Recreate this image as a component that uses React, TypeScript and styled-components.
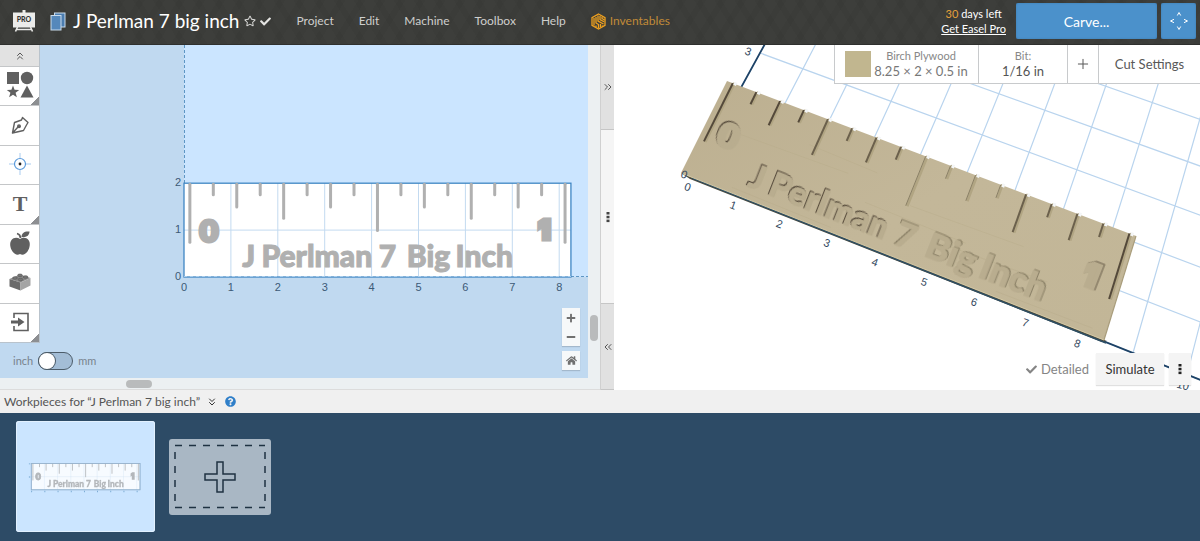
import React from "react";
import styled, { createGlobalStyle, css } from "styled-components";
import { FaCheck, FaHome, FaMinus, FaPlus, FaQuestionCircle, FaRegStar } from "react-icons/fa";
import { ChevronsDown, ChevronsLeft, ChevronsRight, ChevronsUp, Plus } from "lucide-react";

const GlobalStyle = createGlobalStyle`
  *, *::before, *::after { box-sizing: border-box; }
  body { margin: 0; font-family: Lato, "Liberation Sans", sans-serif; font-size: 13px; color: #555; background: #2d4b66; }
  button { font: inherit; color: inherit; border: 0; padding: 0; margin: 0; background: none; cursor: pointer; }
  a { color: inherit; }
`;

const Page = styled.div`
  display: flex;
  flex-direction: column;
  min-height: 100vh;
`;

/* ---------- header ---------- */

const Header = styled.header`
  display: flex;
  align-items: center;
  height: 45px;
  padding: 0 4px 2px 12px;
  color: #fff;
  background:
    repeating-linear-gradient(58deg, rgba(0, 0, 0, 0.04) 0 6px, transparent 6px 17px),
    repeating-linear-gradient(-58deg, rgba(0, 0, 0, 0.04) 0 6px, transparent 6px 17px),
    #3d3e3b;
  border-bottom: 1px solid #2f302e;
`;

const Title = styled.h1`
  display: flex;
  align-items: center;
  margin: 0 0 0 14px;
  font-size: 19px;
  line-height: 24px;
  font-weight: 400;
  white-space: nowrap;
  svg { flex: none; }
`;

const TitleName = styled.span`
  margin: 0 5px 0 7px;
`;

const TitleButton = styled.button`
  display: flex;
  margin-right: 4px;
  color: #d6d6d4;
`;

const Nav = styled.nav`
  display: flex;
  align-items: center;
  gap: 25px;
  margin-left: 25px;
  font-size: 12px;
  line-height: 20px;
`;

const NavLink = styled.a<{ $brand?: boolean }>`
  display: flex;
  align-items: center;
  gap: 4px;
  text-decoration: none;
  color: ${(p) => (p.$brand ? "#c08a38" : "#cfcfcd")};
`;

const HeaderEnd = styled.div`
  display: flex;
  align-items: center;
  gap: 4px;
  height: 36px;
  margin-left: auto;
`;

const Trial = styled.div`
  margin-right: 6px;
  font-size: 11px;
  line-height: 15px;
  text-align: center;
  white-space: nowrap;
  a { display: block; }
  b { font-weight: 400; color: #e5a03a; }
`;

const BlueButton = styled.button<{ $wide?: boolean }>`
  display: flex;
  align-items: center;
  justify-content: center;
  width: ${(p) => (p.$wide ? "141px" : "35px")};
  height: 36px;
  border-radius: 2px;
  background: #4b91cb;
  box-shadow: inset 0 0 2px #3a79b0;
  color: #fff;
  font-size: 14px;
`;

/* ---------- work area ---------- */

const Workspace = styled.main`
  display: grid;
  grid-template-columns: minmax(0, 50%) 14px minmax(0, 1fr);
  flex: 1;
  min-height: 345px;
`;

const Editor = styled.section`
  display: grid;
  grid-template: minmax(0, 1fr) 12px / minmax(0, 1fr) 12px;
  background: #ecf0f2;
`;

const Stage = styled.div`
  position: relative;
  display: flex;
  justify-content: space-between;
  align-items: stretch;
  overflow: hidden;
  background: #c0d9f0;
`;

const Backdrop = styled.svg`
  position: absolute;
  inset: 0;
  width: 100%;
  height: 100%;
`;

const LeftTools = styled.div`
  position: relative;
  display: flex;
  flex-direction: column;
`;

const Toolbox = styled.div`
  display: flex;
  flex-direction: column;
  width: 40px;
  height: 298px;
  border-right: 1px solid #b9c3cc;
  border-bottom: 1px solid #b9c3cc;
  background: #fff;
`;

const Collapse = styled.button`
  display: flex;
  align-items: center;
  justify-content: center;
  height: 21px;
  background: #e2e2e2;
  color: #555;
`;

const Tool = styled.button<{ $more?: boolean }>`
  display: flex;
  flex: 1;
  align-items: center;
  justify-content: center;
  padding-bottom: 2px;
  border-top: 1px solid #c4c6c8;
  color: #606060;
  background: ${(p) => (p.$more ? "linear-gradient(135deg, transparent 50%, #8d8f92 51%) right bottom / 9px 9px no-repeat, #fff" : "#fff")};
`;

const UnitSwitch = styled.label`
  display: flex;
  align-items: center;
  gap: 5px;
  margin: 8px 0 0 13px;
  font-size: 11px;
  line-height: 20px;
  color: #78838d;
`;

const Switch = styled.input`
  appearance: none;
  position: relative;
  width: 35px;
  height: 18px;
  margin: 0;
  border: 1px solid #4c5c69;
  border-radius: 9px;
  background: #a3bdd6;
  &::before {
    content: "";
    position: absolute;
    left: 0;
    top: 0;
    width: 16px;
    height: 16px;
    border-radius: 8px;
    background: #fff;
    box-shadow: 0 0 0 1px #4c5c69;
  }
  &:checked::before { left: 17px; }
`;

const ZoomTools = styled.div`
  position: relative;
  display: flex;
  flex-direction: column;
  justify-content: flex-end;
  gap: 5px;
  margin: 0 8px 8px 0;
`;

const ZoomGroup = styled.div`
  display: flex;
  flex-direction: column;
  width: 18px;
  background: #f6f8f9;
  box-shadow: 0 1px 1px rgba(0, 0, 0, 0.15);
`;

const ZoomButton = styled.button`
  display: flex;
  align-items: center;
  justify-content: center;
  height: 19px;
  color: #707070;
`;

const Scroll = styled.div<{ $horizontal?: boolean }>`
  display: flex;
  justify-content: flex-end;
  ${(p) =>
    p.$horizontal
      ? css`grid-column: 1 / -1; align-items: flex-start; padding: 2px 448px 2px 0; border-bottom: 1px solid #dcdcdc;`
      : css`flex-direction: column; align-items: center; padding-bottom: 37px;`}
`;

const Thumb = styled.div<{ $horizontal?: boolean }>`
  width: ${(p) => (p.$horizontal ? "26px" : "8px")};
  height: ${(p) => (p.$horizontal ? "8px" : "26px")};
  border-radius: 4px;
  background: #b9bbbc;
`;

const Divider = styled.div`
  display: grid;
  grid-template-rows: 85fr 174fr 86fr;
  border-left: 1px solid #d0d0d0;
`;

const DividerButton = styled.button<{ $grip?: boolean }>`
  display: flex;
  align-items: center;
  justify-content: center;
  border-bottom: 1px solid #c6c6c6;
  color: #555;
  background: ${(p) => (p.$grip ? "#f5f5f5" : "#e1e1e1")};
`;

const Preview = styled.section`
  position: relative;
  display: flex;
  flex-direction: column;
  justify-content: space-between;
  align-items: flex-end;
  overflow: hidden;
  background: #fff;
`;

const CutBar = styled.div`
  position: relative;
  display: flex;
  height: 39px;
  border: 1px solid #c8cacc;
  border-width: 0 0 1px 1px;
  background: #fff;
`;

const CutCell = styled.button<{ $width: number }>`
  display: flex;
  align-items: center;
  justify-content: center;
  gap: 3px;
  width: ${(p) => p.$width}px;
  border-right: 1px solid #c8cacc;
  color: #585858;
  &:last-child { border-right: 0; }
`;

const Swatch = styled.span`
  width: 26px;
  height: 26px;
  background: #c1b68f;
`;

const CutText = styled.span<{ $muted?: boolean }>`
  display: flex;
  flex-direction: column;
  align-items: center;
  font-size: 13px;
  line-height: 17px;
  color: ${(p) => (p.$muted ? "#777" : "#555")};
  small { font-size: 11px; line-height: 15px; color: #888; }
`;

const PreviewTools = styled.div`
  position: relative;
  display: flex;
  align-items: center;
  margin: 0 9px 5px 0;
`;

const Detailed = styled.button`
  display: flex;
  align-items: center;
  gap: 4px;
  margin-right: 7px;
  color: #858585;
`;

const GreyButton = styled.button<{ $width: number }>`
  display: flex;
  align-items: center;
  justify-content: center;
  width: ${(p) => p.$width}px;
  height: 32px;
  margin-right: ${(p) => (p.$width > 40 ? 5 : 0)}px;
  background: #f4f4f4;
  box-shadow: 0 1px 1px rgba(0, 0, 0, 0.12);
  color: #333;
`;

/* ---------- workpieces ---------- */

const PiecesBar = styled.div`
  display: flex;
  align-items: center;
  height: 23px;
  padding-left: 4px;
  background: #f0f0f0;
`;

const PiecesTitle = styled.h2`
  margin: 0 6px 0 0;
  font-size: 12px;
  line-height: 20px;
  font-weight: 400;
`;

const BarButton = styled.button<{ $blue?: boolean }>`
  display: flex;
  margin-right: 7px;
  color: ${(p) => (p.$blue ? "#2f7fc9" : "#333")};
`;

const Tray = styled.div`
  display: flex;
  align-items: center;
  gap: 14px;
  padding: 8px 16px 9px;
  background: #2d4b66;
  border-bottom: 1px solid #1f3242;
`;

const Piece = styled.button`
  width: 139px;
  height: 111px;
  border-radius: 3px;
  background: #cbe5ff;
  box-shadow: inset 0 0 0 1px #e2f1ff;
  svg { display: block; width: 100%; height: 100%; }
`;

const AddPiece = styled.button`
  width: 102px;
  height: 76px;
  border-radius: 3px;
  background: #a9b7c4;
  svg { display: block; }
`;

/* ---------- ruler design, in inches ---------- */

const BOARD_W = 8.25;
const BOARD_H = 2;

const tickLength = (k: number) => {
  if (k % 16 === 0) return 1.28;
  if (k === 8) return 1.03;
  if (k % 4 === 0) return 0.77;
  return k % 2 === 0 ? 0.53 : 0.27;
};
const ticks = Array.from({ length: 17 }, (_, k) => ({ k, x: 0.125 + k / 2, len: tickLength(k) }));

type Engraving = { text: string; x: number; y: number; size: number; family: string; bold: number };
const BODY_FONT = 'Lato, "Liberation Sans", sans-serif';
const engravings: Engraving[] = [
  { text: "0", x: 0.31, y: 0.75, size: 30, family: '"DejaVu Sans", sans-serif', bold: 3 },
  { text: "1", x: 7.56, y: 0.8, size: 26, family: 'Inter, "Liberation Sans", sans-serif', bold: 5 },
  { text: "J", x: 1.24, y: 0.22, size: 30, family: BODY_FONT, bold: 1 },
  { text: "Perlman", x: 1.65, y: 0.22, size: 30, family: BODY_FONT, bold: 1 },
  { text: "7", x: 4.15, y: 0.22, size: 30, family: BODY_FONT, bold: 1 },
  { text: "Big", x: 4.75, y: 0.22, size: 30, family: BODY_FONT, bold: 1 },
  { text: "Inch", x: 5.79, y: 0.22, size: 30, family: BODY_FONT, bold: 1 },
];

/* ---------- flat view ---------- */

const PPI = 46.9;
const fx = (x: number) => 184 + x * PPI;
const fy = (y: number) => 277 - y * PPI;

const FlatRuler = () => (
  <g>
    <rect x={fx(0)} y={fy(2)} width={BOARD_W * PPI} height={BOARD_H * PPI} fill="#fff" />
    <g stroke="#c3daf0" strokeWidth="1">
      {[1, 2, 3, 4, 5, 6, 7, 8].map((n) => (
        <line key={n} x1={fx(n)} x2={fx(n)} y1={fy(0)} y2={fy(2)} />
      ))}
      <line x1={fx(0)} x2={fx(BOARD_W)} y1={fy(1)} y2={fy(1)} />
    </g>
    <rect x={fx(0)} y={fy(2)} width={BOARD_W * PPI} height={BOARD_H * PPI} fill="none" stroke="#3f86c4" strokeWidth="1.3" />
    <g stroke="#b0b0b0" strokeWidth="3" strokeLinecap="round">
      {ticks.map((t) => (
        <line key={t.k} x1={fx(t.x)} x2={fx(t.x)} y1={fy(2) + 1} y2={fy(2 - t.len) - 1} />
      ))}
    </g>
    {engravings.map((e) => (
      <text key={e.text} x={fx(e.x)} y={fy(e.y)} fontFamily={e.family} fontSize={e.size} fontWeight="900" fill="#b0b0b0" stroke="#b0b0b0" strokeWidth={e.bold}>
        {e.text}
      </text>
    ))}
  </g>
);

const FlatView = () => (
  <Backdrop viewBox="0 45 588 333" preserveAspectRatio="xMinYMin slice" role="img" aria-label="Ruler design">
    <rect x="184" y="45" width="1200" height="232" fill="#cbe5ff" />
    <path d="M184.5 45V183M571 276.5H1200" stroke="#5e96c4" strokeDasharray="3 2" fill="none" />
    <FlatRuler />
    <path d="M184 276.5H571" stroke="#a9cdec" strokeDasharray="3 3" />
    <g fontFamily="Liberation Sans, Arial, sans-serif" fontSize="11" fill="#3c5a76">
      {[0, 1, 2, 3, 4, 5, 6, 7, 8].map((n) => (
        <text key={n} x={fx(n)} y="291" textAnchor="middle">{n}</text>
      ))}
      {[0, 1, 2].map((n) => (
        <text key={n} x="181" y={fy(n) + 3} textAnchor="end">{n}</text>
      ))}
    </g>
  </Backdrop>
);

/* ---------- perspective view ---------- */

type Pt = [number, number];

// Maps a w × h rectangle on to the quad a (origin), b (+x), c (+x+y), d (+y).
const perspective = (w: number, h: number, a: Pt, b: Pt, c: Pt, d: Pt) => {
  const dx1 = b[0] - c[0], dx2 = d[0] - c[0], sx = a[0] - b[0] + c[0] - d[0];
  const dy1 = b[1] - c[1], dy2 = d[1] - c[1], sy = a[1] - b[1] + c[1] - d[1];
  const den = dx1 * dy2 - dx2 * dy1;
  const g = (sx * dy2 - dx2 * sy) / den;
  const k = (dx1 * sy - sx * dy1) / den;
  return (x: number, y: number): Pt => {
    const u = x / w, v = y / h, q = g * u + k * v + 1;
    return [
      ((b[0] - a[0] + g * b[0]) * u + (d[0] - a[0] + k * d[0]) * v + a[0]) / q,
      ((b[1] - a[1] + g * b[1]) * u + (d[1] - a[1] + k * d[1]) * v + a[1]) / q,
    ];
  };
};

const bed = perspective(9, 3, [692, 177], [1133, 353], [1175, 206], [760, 53]);
const top = perspective(BOARD_W, BOARD_H, [681, 173], [1104, 340], [1136, 236], [727, 81]);

const seg = (f: (x: number, y: number) => Pt, x1: number, y1: number, x2: number, y2: number) =>
  `M${f(x1, y1).join(" ")}L${f(x2, y2).join(" ")}`;
const angle = (x: number, y: number) => {
  const [ax, ay] = top(x, y);
  const [bx, by] = top(x + 1, y);
  return { deg: (Math.atan2(by - ay, bx - ax) * 180) / Math.PI, scale: Math.hypot(bx - ax, by - ay) / PPI };
};

const range = (n: number) => Array.from({ length: n }, (_, i) => i);
const grid = [
  ...range(13).map((n) => seg(bed, n, 0, n, 8)),
  ...range(8).map((n) => seg(bed, 0, n, 12, n)),
].join("");

const toneAt = (x: number) => {
  const d = Math.abs(x - 4.9);
  return d > 3 ? "#54493a" : d > 1.2 ? "#6b604c" : "#8a8066";
};

const PerspectiveView = () => (
  <Backdrop viewBox="614 45 586 345" preserveAspectRatio="xMinYMin slice" role="img" aria-label="Carved ruler preview">
    <defs>
      <linearGradient id="wood" x1="0" y1="0" x2="1" y2="1">
        <stop offset="0" stopColor="#bcaf90" />
        <stop offset="0.5" stopColor="#c3b799" />
        <stop offset="1" stopColor="#c2b697" />
      </linearGradient>
    </defs>
    <path d={grid} stroke="#b9d4ee" strokeWidth="1.2" fill="none" />
    <path d={seg(bed, 0, 0, 0, 5) + seg(bed, 0, 0, 12, 0)} stroke="#1d4266" strokeWidth="1.8" fill="none" />
    <path d="M681 173L1104 340L1107 341L1102 342L690 179Z" fill="#4c4a3b" />
    <path d="M692 178L1106 343" stroke="#2d4f66" strokeWidth="1.4" />
    <path d="M681 173L727 81L1136 236L1104 340Z" fill="url(#wood)" />
    <path d="M681 173L1104 340" stroke="#d3c7a3" strokeWidth="1" />
    <path d="M1136 236L1104 340" stroke="#a99d7c" strokeWidth="1.2" />
    <g fill="none" stroke="#b7ab89" opacity="0.4">
      <path d={seg(top, 0.6, 1.1, 2.9, 1.15) + seg(top, 2, 1.4, 3.4, 1.36) + seg(top, 4.2, 1.0, 6.4, 1.05) + seg(top, 1, 0.1, 3, 0.08)} />
      <path d={seg(top, 5, 0.55, 7, 0.6) + seg(top, 6.2, 0.1, 8, 0.12) + seg(top, 3.4, 0.75, 5.4, 0.72)} />
    </g>
    {ticks.map((t) => (
      <g key={t.k} fill="none">
        <path d={seg(top, t.x + 0.03, 2.02, t.x + 0.03, 2 - t.len)} stroke="#b1a583" strokeWidth="2.6" />
        <path d={seg(top, t.x, 2.0, t.x, 2 - t.len)} stroke={toneAt(t.x)} strokeWidth={Math.abs(t.x - 4.9) > 1.2 ? 2 : 1} />
        <path d={seg(top, t.x + 0.05, 2.04, t.x + 0.05, 1.97)} stroke="#f4f6f7" strokeWidth="3" />
      </g>
    ))}
    {engravings.map((e) => {
      const [x, y] = top(e.x, e.y);
      const a = angle(e.x, e.y);
      const side = e.x < 4.7 ? -1 : 1;
      return (
        <text
          key={e.text}
          transform={`translate(${x} ${y}) rotate(${a.deg})`}
          fontFamily={e.family}
          fontSize={Math.round(e.size * a.scale)}
          fontWeight="900"
          fill="#b9ad8f"
          stroke="#b9ad8f"
          strokeWidth={e.bold}
          style={{ filter: `drop-shadow(${side}px -1px 0 ${toneAt(e.x)})` }}
        >
          {e.text}
        </text>
      );
    })}
    <g fontFamily="Liberation Sans, Arial, sans-serif" fontSize="11" fill="#34495e" textAnchor="middle">
      {[0, 1, 2, 3, 4, 5, 6, 7, 8].map((n) => {
        const [x, y] = bed(n, -0.22);
        return <text key={n} transform={`translate(${x + 1} ${y}) rotate(20)`} dy="4">{n}</text>;
      })}
      <text transform="translate(1182 389) rotate(14)">10</text>
      <text transform="translate(683 178) rotate(20)">0</text>
      <text transform="translate(747 55) rotate(20)">3</text>
    </g>
  </Backdrop>
);

/* ---------- small drawings ---------- */

const EaselLogo = () => (
  <svg width="24" height="24" viewBox="0 0 24 24" role="img" aria-label="Easel Pro">
    <path d="M10.5 1h3v3h-3zM1 3.5h22v15H1z" fill="#ececea" />
    <path d="M5.5 18L3.5 22.5M18.5 18L20.500 22.500M5 20.500H19" stroke="#ececea" strokeWidth="1.6" fill="none" />
    <text x="12" y="13" textAnchor="middle" fontFamily="Lato, sans-serif" fontSize="7" fontWeight="900" fill="#333">PRO</text>
  </svg>
);

const SheetsIcon = () => (
  <svg width="16" height="19" viewBox="0 0 16 19" aria-hidden="true">
    <rect x="4.500" y="1" width="10.500" height="14" fill="#4b7db0" stroke="#c9dbec" />
    <rect x="1" y="3.500" width="10" height="14.500" fill="#5588bb" stroke="#c9dbec" />
  </svg>
);

const HexIcon = () => (
  <svg width="15" height="17" viewBox="0 0 15 17" aria-hidden="true" fill="none" stroke="#f0a11e" strokeWidth="1.300">
    <path d="M7.500 1L14 4.700V12.300L7.500 16L1 12.300V4.700Z" />
    <path d="M3 5V12.500M5 4V10L7.500 11.500V15M5 12.500V14M7 2.500V8L12.500 11M9 3V6.500L13 8.700M11 4V5.500L13.500 7M9.500 11V14M11.500 12.500V13.500" />
  </svg>
);

const JogIcon = () => (
  <svg width="20" height="20" viewBox="0 0 20 20" aria-hidden="true" fill="none" stroke="#fff">
    <path d="M8.300 4.500L10 1.500L11.700 4.500M8.300 15.500L10 18.500L11.700 15.500M5 8.300L1.500 10L5 11.700M15 8.300L18.500 10L15 11.700" />
  </svg>
);

const ShapesIcon = () => (
  <svg width="28" height="28" viewBox="0 0 28 28" aria-hidden="true" fill="currentColor">
    <rect x="1" y="1" width="12" height="12" />
    <circle cx="21" cy="7" r="6.200" />
    <path d="M7 14.500L8.600 18.800L13.200 19L9.600 21.800L10.900 26.200L7 23.700L3.100 26.200L4.400 21.800L0.800 19L5.400 18.800Z" />
    <path d="M21 14.500L27.500 26.500H14.500Z" />
  </svg>
);

const PenIcon = () => (
  <svg width="20" height="20" viewBox="0 0 20 20" aria-hidden="true" fill="none" stroke="currentColor" strokeWidth="1.400" strokeLinejoin="round">
    <path d="M2.500 18L4.500 7.500L11.500 5L12.500 2.500L18 7.500L16.500 10L13.500 15.500L2.500 18ZM2.500 18L8 12" />
    <circle cx="9" cy="11.200" r="1.300" fill="currentColor" />
  </svg>
);

const TargetIcon = () => (
  <svg width="22" height="22" viewBox="0 0 22 22" aria-hidden="true" fill="none" stroke="#5b9bdc">
    <circle cx="11" cy="11" r="5.500" strokeWidth="1.200" />
    <path d="M11 0V5M11 17V22M0 11H5M17 11H22" stroke="#a8cbef" />
    <circle cx="11" cy="11" r="1.400" fill="#222" stroke="none" />
  </svg>
);

const TextIcon = () => (
  <svg width="16" height="17" viewBox="0 0 16 17" aria-hidden="true" fill="currentColor">
    <text x="8" y="16" textAnchor="middle" fontFamily="Liberation Serif, serif" fontSize="22" fontWeight="700">T</text>
  </svg>
);

const AppleIcon = () => (
  <svg width="22" height="26" viewBox="0 0 22 26" aria-hidden="true" fill="currentColor">
    <path d="M11 9C8.500 7.300 4.500 7.300 2.500 10C0.300 13 1 18 3.500 21.500C5.500 24.500 8.500 25.500 11 24C13.500 25.500 16.500 24.500 18.500 21.500C21 18 21.700 13 19.500 10C17.500 7.300 13.500 7.300 11 9Z" />
    <path d="M8 3.500C10 4 11.300 5.500 11.500 8" fill="none" stroke="currentColor" strokeWidth="1.800" />
    <path d="M12.500 7C12.500 3 15.500 1 20.500 1.500C20.500 5.500 17 7.800 12.500 7Z" />
  </svg>
);

const BrickIcon = () => (
  <svg width="22" height="18" viewBox="0 0 22 18" aria-hidden="true">
    <path d="M0.500 6L11 1.500L21.500 5L11.500 9.500Z" fill="#8a8a8a" />
    <path d="M0.500 6L11.500 9.500V17.500L0.500 13.500Z" fill="#6a6a6a" />
    <path d="M11.500 9.500L21.500 5V12.500L11.500 17.500Z" fill="#a5a5a5" />
    <g fill="#777" stroke="#555" strokeWidth="0.600">
      <ellipse cx="6" cy="5" rx="2.400" ry="1.300" /><ellipse cx="11" cy="2.300" rx="2.400" ry="1.300" />
      <ellipse cx="11.500" cy="6.500" rx="2.400" ry="1.300" /><ellipse cx="16.500" cy="4" rx="2.400" ry="1.300" />
    </g>
  </svg>
);

const ImportIcon = () => (
  <svg width="20" height="20" viewBox="0 0 20 20" aria-hidden="true">
    <path d="M4 6V1.500H18V18.500H4V14" fill="none" stroke="currentColor" strokeWidth="1.600" />
    <path d="M1 8.500H8V5.500L14.500 10L8 14.500V11.500H1Z" fill="currentColor" />
  </svg>
);

const Dots = ({ color }: { color: string }) => (
  <svg width="4" height="14" viewBox="0 0 4 14" aria-hidden="true" fill={color}>
    <rect x="0.500" y="2" width="3" height="2.500" /><rect x="0.500" y="5.800" width="3" height="2.500" /><rect x="0.500" y="9.600" width="3" height="2.500" />
  </svg>
);

const tools = [
  { name: "Shapes", icon: <ShapesIcon />, more: true },
  { name: "Pen", icon: <PenIcon /> },
  { name: "Drill point", icon: <TargetIcon /> },
  { name: "Text", icon: <TextIcon />, more: true },
  { name: "Icons", icon: <AppleIcon /> },
  { name: "Apps", icon: <BrickIcon /> },
  { name: "Import", icon: <ImportIcon />, more: true },
];

export default function App() {
  return (
    <Page>
      <GlobalStyle />
      <Header>
        <EaselLogo />
        <Title>
          <SheetsIcon />
          <TitleName>J Perlman 7 big inch</TitleName>
          <TitleButton aria-label="Favorite"><FaRegStar size={12} /></TitleButton>
          <FaCheck size={11} color="#e4e4e2" />
        </Title>
        <Nav>
          {["Project", "Edit", "Machine", "Toolbox", "Help"].map((item) => (
            <NavLink key={item} href="#">{item}</NavLink>
          ))}
          <NavLink href="#" $brand><HexIcon />Inventables</NavLink>
        </Nav>
        <HeaderEnd>
          <Trial>
            <b>30</b> days left
            <a href="#">Get Easel Pro</a>
          </Trial>
          <BlueButton $wide>Carve...</BlueButton>
          <BlueButton aria-label="Jog machine"><JogIcon /></BlueButton>
        </HeaderEnd>
      </Header>

      <Workspace>
        <Editor>
          <Stage>
            <FlatView />
            <LeftTools>
              <Toolbox>
                <Collapse aria-label="Collapse tools"><ChevronsUp size={12} strokeWidth={2} /></Collapse>
                {tools.map((t) => (
                  <Tool key={t.name} aria-label={t.name} $more={t.more}>{t.icon}</Tool>
                ))}
              </Toolbox>
              <UnitSwitch>
                inch
                <Switch type="checkbox" role="switch" />
                mm
              </UnitSwitch>
            </LeftTools>
            <ZoomTools>
              <ZoomGroup>
                <ZoomButton aria-label="Zoom in"><FaPlus size={10} /></ZoomButton>
                <ZoomButton aria-label="Zoom out"><FaMinus size={10} /></ZoomButton>
              </ZoomGroup>
              <ZoomGroup>
                <ZoomButton aria-label="Reset view"><FaHome size={11} /></ZoomButton>
              </ZoomGroup>
            </ZoomTools>
          </Stage>
          <Scroll><Thumb /></Scroll>
          <Scroll $horizontal><Thumb $horizontal /></Scroll>
        </Editor>
        <Divider>
          <DividerButton aria-label="Expand editor"><ChevronsRight size={12} strokeWidth={2} /></DividerButton>
          <DividerButton aria-label="Resize panels" $grip><Dots color="#444" /></DividerButton>
          <DividerButton aria-label="Expand preview"><ChevronsLeft size={12} strokeWidth={2} /></DividerButton>
        </Divider>
        <Preview>
          <PerspectiveView />
          <CutBar>
            <CutCell $width={144}>
              <Swatch />
              <CutText $muted><small>Birch Plywood</small>8.25 × 2 × 0.5 in</CutText>
            </CutCell>
            <CutCell $width={89}><CutText><small>Bit:</small>1/16 in</CutText></CutCell>
            <CutCell $width={31} aria-label="Add bit"><Plus size={16} strokeWidth={1.5} /></CutCell>
            <CutCell $width={101}>Cut Settings</CutCell>
          </CutBar>
          <PreviewTools>
            <Detailed><FaCheck size={11} />Detailed</Detailed>
            <GreyButton $width={68}>Simulate</GreyButton>
            <GreyButton $width={22} aria-label="More options"><Dots color="#222" /></GreyButton>
          </PreviewTools>
        </Preview>
      </Workspace>

      <PiecesBar>
        <PiecesTitle>Workpieces for “J Perlman 7 big inch”</PiecesTitle>
        <BarButton aria-label="Collapse workpieces"><ChevronsDown size={12} strokeWidth={2} /></BarButton>
        <BarButton aria-label="Help" $blue><FaQuestionCircle size={11} /></BarButton>
      </PiecesBar>
      <Tray>
        <Piece aria-label="Workpiece 1">
          <svg viewBox="130 32 494 395" aria-hidden="true">
            <g opacity="0.85">
              <FlatRuler />
              <rect x="184" y="183" width="387" height="94" fill="none" stroke="#8fa9c2" strokeWidth="3" />
              <path d="M178 183V277M184 283H571" fill="none" stroke="#5e96c4" strokeWidth="5" strokeDasharray="3 43.9" />
            </g>
          </svg>
        </Piece>
        <AddPiece aria-label="Add workpiece">
          <svg width="102" height="76" viewBox="0 0 102 76" aria-hidden="true" fill="none" stroke="#1f3242">
            <path d="M6 6.500H96M6 68.500H96" strokeDasharray="7 7" strokeWidth="1.500" />
            <path d="M6 13V62M96 13V62" strokeDasharray="7 7" strokeWidth="1.500" />
            <path d="M48 23H54V35H66V41H54V53H48V41H36V35H48Z" strokeWidth="1.500" />
          </svg>
        </AddPiece>
      </Tray>
    </Page>
  );
}
